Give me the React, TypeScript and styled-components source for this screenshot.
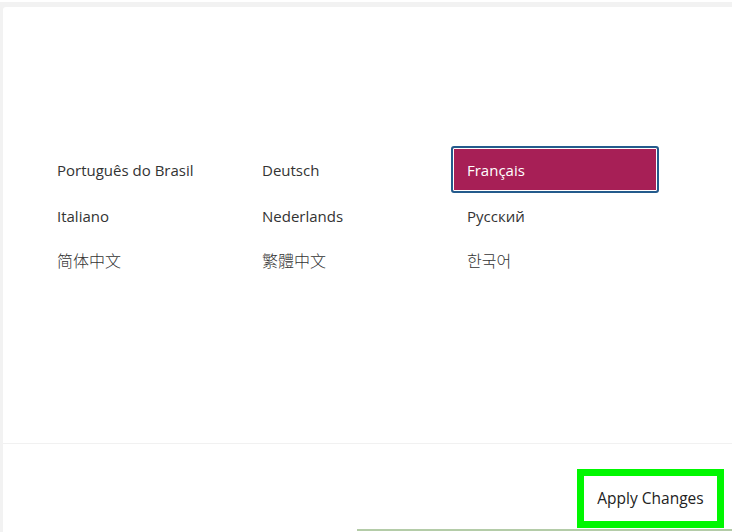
import React from "react";
import styled, { createGlobalStyle } from "styled-components";

const Global = createGlobalStyle`
  html, body { margin: 0; padding: 0; background: #ffffff; }
  body { font-family: "Open Sans", "Noto Sans CJK SC", sans-serif; }
  * { box-sizing: border-box; }
`;

const Page = styled.div`
  width: 732px;
  height: 532px;
  padding-top: 2px;
  background: #ffffff;
  overflow: hidden;
`;

const Frame = styled.div`
  height: 530px;
  background: #f2f2f2;
  padding: 5px 0 0 3px;
`;

const Panel = styled.div`
  height: 525px;
  background: #ffffff;
  border-top-left-radius: 3px;
  display: flex;
  flex-direction: column;
`;

const Languages = styled.div`
  height: 436px;
  padding: 140px 0 0 38px;
  display: grid;
  grid-template-columns: repeat(3, 205px);
  grid-auto-rows: 46px;
  align-content: start;
`;

const Lang = styled.div<{ $selected?: boolean; $cjk?: boolean }>`
  display: flex;
  align-items: center;
  padding-left: ${(p) => (p.$selected ? "14px" : "16px")};
  padding-bottom: ${(p) => (p.$cjk ? "4px" : "0")};
  font-family: ${(p) =>
    p.$cjk ? '"Noto Sans CJK SC", "Noto Sans CJK KR", sans-serif' : '"Open Sans", sans-serif'};
  font-size: ${(p) => (p.$cjk ? "16px" : "15px")};
  font-weight: ${(p) => (p.$cjk ? 300 : 400)};
  color: ${(p) => (p.$selected ? "#ffffff" : "#333333")};
  width: ${(p) => (p.$selected ? "208px" : "auto")};
  height: ${(p) => (p.$selected ? "47px" : "46px")};
  margin-top: ${(p) => (p.$selected ? "-1px" : "0")};
  background: ${(p) => (p.$selected ? "#a71f56" : "transparent")};
  border: ${(p) => (p.$selected ? "2px solid #245b8c" : "none")};
  border-radius: ${(p) => (p.$selected ? "3px" : "0")};
  box-shadow: ${(p) => (p.$selected ? "inset 0 0 0 1px #ffffff" : "none")};
`;

const Divider = styled.div`
  height: 1px;
  background: #f1f1f1;
`;

const Footer = styled.div`
  flex: 1;
  display: flex;
  flex-direction: column;
`;

const Actions = styled.div`
  flex: 1;
  display: flex;
  justify-content: flex-end;
  align-items: flex-start;
  padding: 25px 8px 0 0;
`;

const Highlight = styled.div`
  border: 7px solid #00f700;
`;

const ApplyButton = styled.button`
  width: 133px;
  height: 45px;
  border: none;
  background: #ffffff;
  font-family: "Open Sans", sans-serif;
  font-size: 15.5px;
  color: #222222;
  padding: 0 0 2px 0;
  display: flex;
  align-items: center;
  justify-content: center;
`;

const BottomRule = styled.div`
  height: 2px;
  margin-left: 354px;
  margin-bottom: 1px;
  background: #b4cca8;
`;

const langs: { label: string; cjk?: boolean; lang?: string }[] = [
  { label: "Português do Brasil" },
  { label: "Deutsch" },
  { label: "Français" },
  { label: "Italiano" },
  { label: "Nederlands" },
  { label: "Русский" },
  { label: "简体中文", cjk: true, lang: "zh-Hans" },
  { label: "繁體中文", cjk: true, lang: "zh-Hant" },
  { label: "한국어", cjk: true, lang: "ko" },
];

export default function App() {
  return (
    <Page>
      <Global />
      <Frame>
        <Panel>
          <Languages>
            {langs.map((l) => (
              <Lang
                key={l.label}
                lang={l.lang}
                $cjk={l.cjk}
                $selected={l.label === "Français"}
              >
                {l.label}
              </Lang>
            ))}
          </Languages>
          <Divider />
          <Footer>
            <Actions>
              <Highlight>
                <ApplyButton>Apply Changes</ApplyButton>
              </Highlight>
            </Actions>
            <BottomRule />
          </Footer>
        </Panel>
      </Frame>
    </Page>
  );
}
